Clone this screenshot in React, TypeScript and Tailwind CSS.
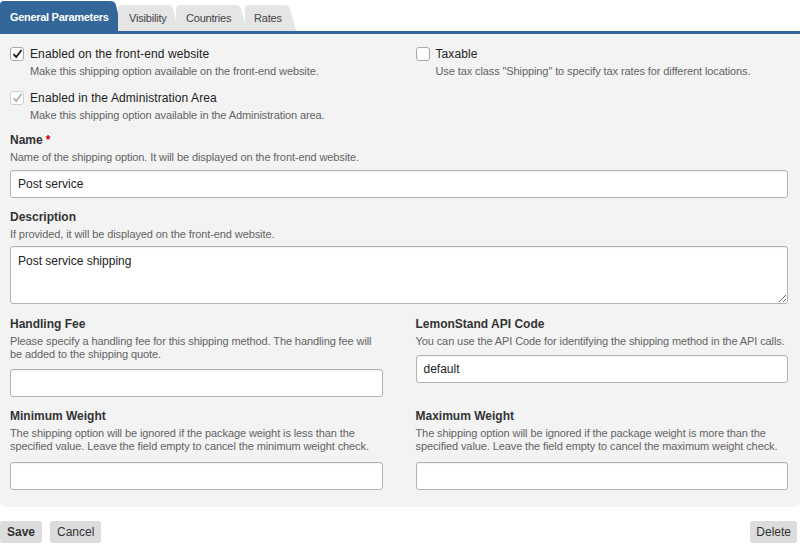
import React from "react";

const font = { fontFamily: '"Liberation Sans", Arial, sans-serif' };

function TabShape({ w, h, color }: { w: number; h: number; color: string }) {
  const d = `M0,${h} L0,4 Q0,0 4,0 L${w - 14},0 Q${w - 9},0 ${w - 8},4 L${w - 3},${h - 4} Q${w - 2},${h} ${w},${h} Z`;
  return (
    <svg className="absolute left-0 top-0" width={w} height={h} viewBox={`0 0 ${w} ${h}`}>
      <path d={d} fill={color} />
    </svg>
  );
}

function Tab({ label, w, active, pl, ml }: { label: string; w: number; active?: boolean; pl: string; ml: string }) {
  const h = active ? 30 : 26;
  return (
    <div className={`relative ${ml}`} style={{ width: w, height: h }}>
      <TabShape w={w} h={h} color={active ? "#336699" : "#e5e5e5"} />
      <span
        className={`relative flex h-full items-center ${pl} text-[11px] ${
          active ? "font-bold text-white tracking-[-0.3px] pt-[2px]" : "text-[#444] tracking-[-0.2px] pt-[1px]"
        }`}
      >
        {label}
      </span>
    </div>
  );
}

function CheckBox({ state }: { state: "checked" | "disabled" | "unchecked" }) {
  const border = state === "disabled" ? "border-[#d0d0d0]" : "border-[#a8a8a8]";
  return (
    <div className={`w-[14px] h-[14px] shrink-0 rounded-[3px] border ${border} bg-white flex items-center justify-center`}>
      {state !== "unchecked" && (
        <svg width="11" height="10" viewBox="0 0 11 10">
          <path
            d="M1.5,5.2 L4.2,8 L9.5,1"
            fill="none"
            stroke={state === "checked" ? "#222" : "#b5b5b5"}
            strokeWidth="1.9"
          />
        </svg>
      )}
    </div>
  );
}

function CheckRow({ state, label, desc, className }: { state: "checked" | "disabled" | "unchecked"; label: string; desc: string; className?: string }) {
  return (
    <div className={className}>
      <div className="flex items-center gap-[6px] h-[16px]">
        <CheckBox state={state} />
        <span className="text-[12px] leading-[16px] text-[#222] tracking-[0.1px]">{label}</span>
      </div>
      <div className="pl-[20px] mt-[3px] text-[11px] leading-[13px] text-[#636363] tracking-[-0.1px]">{desc}</div>
    </div>
  );
}

function Label({ children, required }: { children: React.ReactNode; required?: boolean }) {
  return (
    <div className="text-[12px] leading-[15px] font-bold text-[#333]">
      {children}
      {required && <span className="text-[#cc0000] ml-[3px]">*</span>}
    </div>
  );
}

function Desc({ children }: { children: React.ReactNode }) {
  return <div className="mt-[3px] text-[11px] leading-[13px] text-[#636363] tracking-[-0.1px]">{children}</div>;
}

function Input({ value, className }: { value?: string; className?: string }) {
  return (
    <div
      className={`h-[28px] rounded-[3px] border border-[#b3b3b3] bg-white shadow-[inset_0_1px_1px_rgba(0,0,0,0.06)] flex items-center px-[7px] text-[12px] text-[#222] ${className ?? ""}`}
    >
      {value}
    </div>
  );
}

export default function App() {
  return (
    <div className="w-[805px] h-[544px] bg-white" style={font}>
      <div className="w-[800px]">
        <div className="flex items-end h-[31px]">
          <Tab label="General Parameters" w={124} active pl="pl-[10px]" ml="" />
          <Tab label="Visibility" w={63} pl="pl-[11px]" ml="-ml-[6px]" />
          <Tab label="Countries" w={73} pl="pl-[10px]" ml="-ml-[5px]" />
          <Tab label="Rates" w={53} pl="pl-[9px]" ml="-ml-[4px]" />
        </div>
        <div className="h-[3px] bg-[#336699]" />
        <div className="bg-[#f3f3f3] rounded-b-[6px] pl-[10px] pr-[12px] pt-[12px] pb-[17px]">
          <div className="grid grid-cols-2 gap-x-[33px]">
            <div>
              <CheckRow state="checked" label="Enabled on the front-end website" desc="Make this shipping option available on the front-end website." />
              <CheckRow
                className="mt-[12px]"
                state="disabled"
                label="Enabled in the Administration Area"
                desc="Make this shipping option available in the Administration area."
              />
            </div>
            <div>
              <CheckRow state="unchecked" label="Taxable" desc={'Use tax class "Shipping" to specify tax rates for different locations.'} />
            </div>
          </div>

          <div className="mt-[11px]">
            <Label required>Name</Label>
            <Desc>Name of the shipping option. It will be displayed on the front-end website.</Desc>
            <Input className="mt-[6px]" value="Post service" />
          </div>

          <div className="mt-[12px]">
            <Label>Description</Label>
            <Desc>If provided, it will be displayed on the front-end website.</Desc>
            <textarea
              readOnly
              defaultValue="Post service shipping"
              className="mt-[5px] block w-full h-[58px] rounded-[3px] border border-[#b3b3b3] bg-white shadow-[inset_0_1px_1px_rgba(0,0,0,0.06)] px-[7px] py-[7px] text-[12px] leading-[15px] text-[#222] outline-none resize-y"
              style={font}
            />
          </div>

          <div className="grid grid-cols-2 gap-x-[33px] mt-[13px]">
            <div>
              <Label>Handling Fee</Label>
              <Desc>Please specify a handling fee for this shipping method. The handling fee will be added to the shipping quote.</Desc>
              <Input className="mt-[8px]" />
            </div>
            <div>
              <Label>LemonStand API Code</Label>
              <Desc>You can use the API Code for identifying the shipping method in the API calls.</Desc>
              <Input className="mt-[7px]" value="default" />
            </div>
          </div>

          <div className="grid grid-cols-2 gap-x-[33px] mt-[12px]">
            <div>
              <Label>Minimum Weight</Label>
              <Desc>The shipping option will be ignored if the package weight is less than the specified value. Leave the field empty to cancel the minimum weight check.</Desc>
              <Input className="mt-[9px]" />
            </div>
            <div>
              <Label>Maximum Weight</Label>
              <Desc>The shipping option will be ignored if the package weight is more than the specified value. Leave the field empty to cancel the maximum weight check.</Desc>
              <Input className="mt-[9px]" />
            </div>
          </div>
        </div>

        <div className="flex items-center mt-[14px]">
          <button className="h-[22px] px-[7px] rounded-[3px] bg-[#dcdcdc] text-[12px] font-bold text-[#333]">Save</button>
          <button className="h-[22px] px-[7px] ml-[8px] rounded-[3px] bg-[#dcdcdc] text-[12px] text-[#333]">Cancel</button>
          <button className="h-[22px] px-[6px] ml-auto mr-[3px] rounded-[3px] bg-[#dcdcdc] text-[12px] text-[#333]">Delete</button>
        </div>
      </div>
    </div>
  );
}
